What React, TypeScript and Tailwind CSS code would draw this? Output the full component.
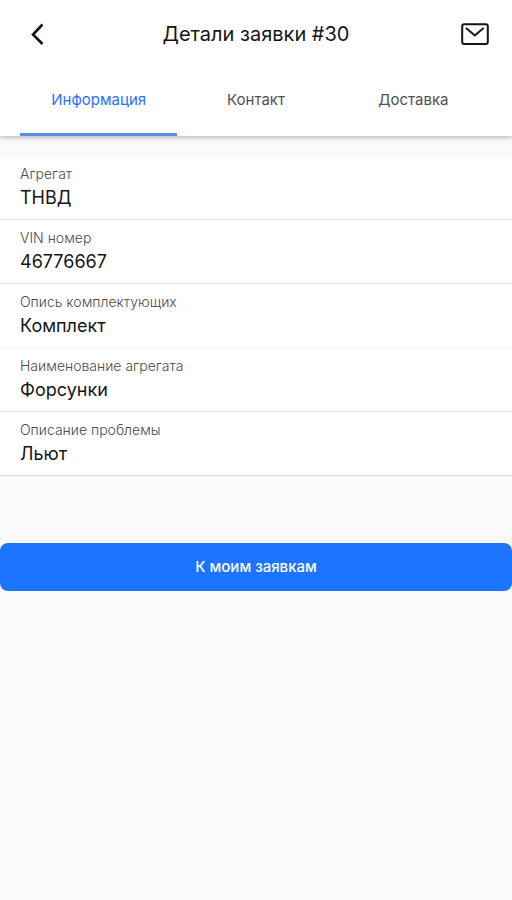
import { useState } from "react";

const tabs = ["Информация", "Контакт", "Доставка"];

const details = [
  { label: "Агрегат", value: "ТНВД", divider: "border-[#dedede]" },
  { label: "VIN номер", value: "46776667", divider: "border-[#dedede]" },
  { label: "Опись комплектующих", value: "Комплект", divider: "border-[#f1f1f1]" },
  { label: "Наименование агрегата", value: "Форсунки", divider: "border-[#dedede]" },
  { label: "Описание проблемы", value: "Льют", divider: "border-[#dedede]" },
];

function BackIcon() {
  return (
    <svg width="16" height="24" viewBox="0 0 16 24" fill="none" stroke="currentColor" strokeWidth="2.6" aria-hidden="true">
      <path d="M13.500 2.500 4 12.500l9.500 9.500" />
    </svg>
  );
}

function MailIcon() {
  return (
    <svg width="28" height="24" viewBox="0 0 28 24" fill="none" stroke="currentColor" strokeWidth="2" aria-hidden="true">
      <rect x="1.200" y="2.200" width="25.600" height="19.800" rx="2" />
      <path d="m5 6 8.800 7.500L22.600 6" />
    </svg>
  );
}

export default function App() {
  const [active, setActive] = useState(0);

  return (
    <div className="min-h-screen bg-[#f9f9f9] font-[Inter,'Liberation_Sans',sans-serif] text-[#151515]">
      <div className="bg-white shadow-[0_1px_5px_rgba(0,0,0,0.3)]">
        <header className="flex h-17 items-center justify-between px-[23px]">
          <button type="button" aria-label="Назад" className="flex w-7 justify-center">
            <BackIcon />
          </button>
          <h1 className="text-xl">Детали заявки #30</h1>
          <button type="button" aria-label="Сообщения" className="flex w-7 justify-center">
            <MailIcon />
          </button>
        </header>
        <nav role="tablist" className="grid h-17 grid-cols-3 px-5">
          {tabs.map((tab, index) => (
            <button
              key={tab}
              type="button"
              role="tab"
              aria-selected={active === index}
              onClick={() => setActive(index)}
              className={
                active === index
                  ? "border-b-3 border-[#5b8bea] text-[15px] text-[#2b72f6]"
                  : "border-b-3 border-transparent text-[15px] text-[#505050]"
              }
            >
              {tab}
            </button>
          ))}
        </nav>
      </div>
      <main className="pt-5">
        <dl className="bg-white">
          {details.map(({ label, value, divider }) => (
            <div key={label} className={`h-16 border-b px-5 pt-2 ${divider}`}>
              <dt className="text-sm leading-5 font-light text-[#4c4c4c]">{label}</dt>
              <dd className="text-lg leading-7">{value}</dd>
            </div>
          ))}
        </dl>
        <button
          type="button"
          className="mt-[67px] h-12 w-full rounded-lg bg-[#1d75ff] text-[15px] font-medium text-white"
        >
          К моим заявкам
        </button>
      </main>
    </div>
  );
}
